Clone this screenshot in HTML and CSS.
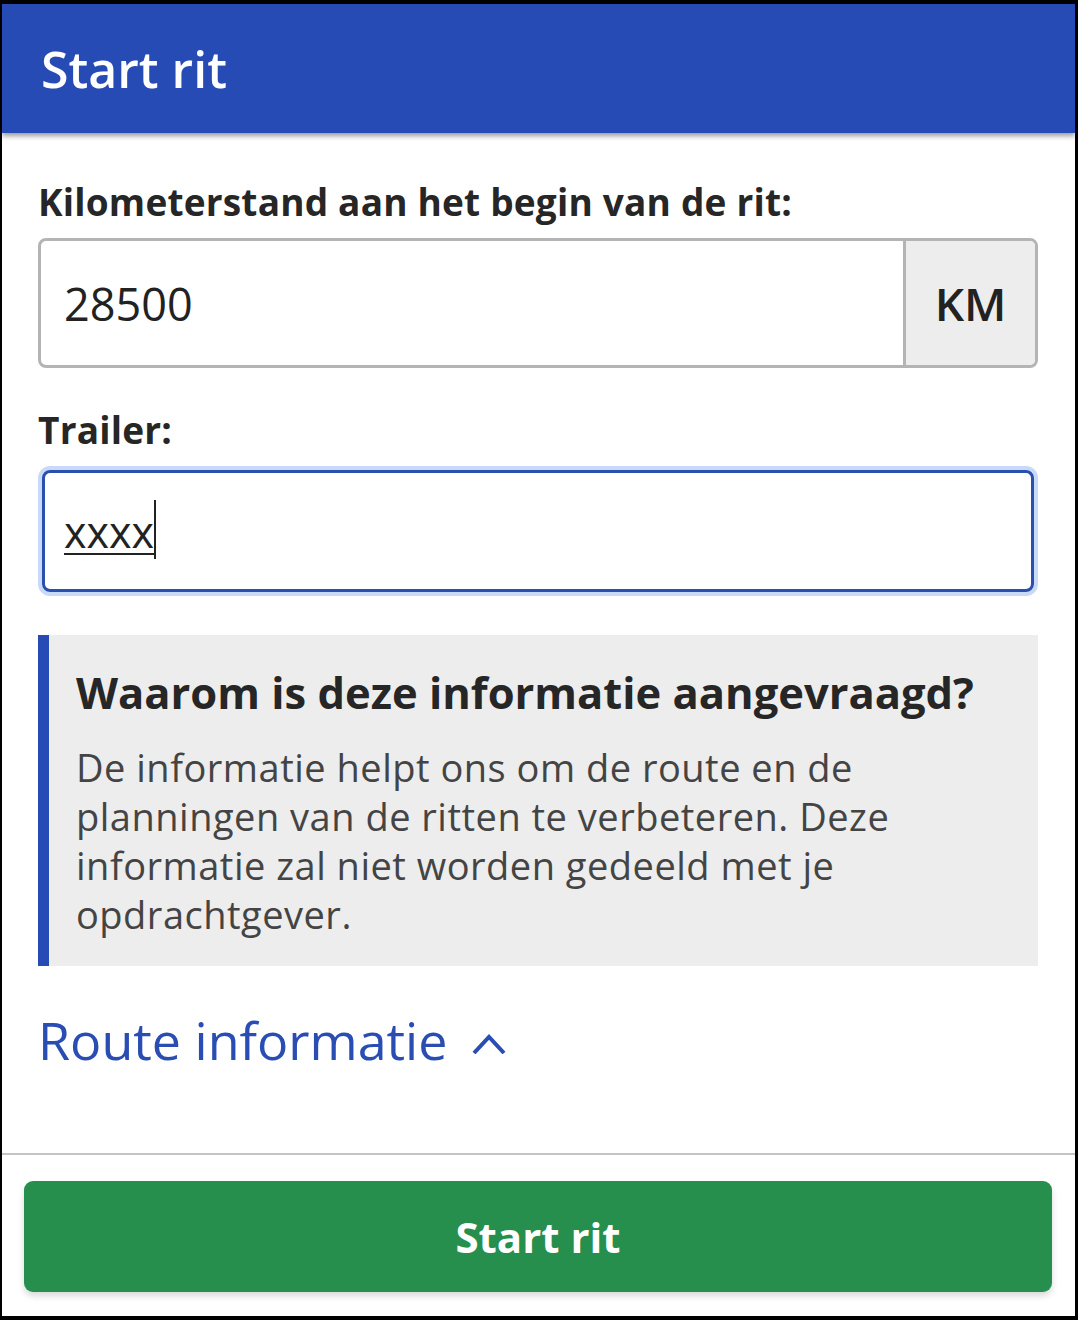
FILE: index.html
```html
<!DOCTYPE html>
<html lang="nl">

<head>
    <meta charset="UTF-8">
    <meta name="viewport" content="width=device-width, initial-scale=1.0">
    <title>Start rit</title>
    <link rel="stylesheet" href="styles.css">
</head>

<body>
    <div class="frame">
        <div class="header">
            <h1>Start rit</h1>
        </div>

        <div class="main">
            <label class="label">Kilometerstand aan het begin van de rit:</label>
            <div class="group">
                <div class="field">28500</div>
                <div class="addon">KM</div>
            </div>

            <label class="label label-trailer">Trailer:</label>
            <div class="focus">
                <div class="field"><span class="typed">xxxx</span><span class="caret"></span></div>
            </div>

            <div class="info">
                <h2>Waarom is deze informatie aangevraagd?</h2>
                <p>De informatie helpt ons om de route en de planningen van de ritten te verbeteren. Deze informatie zal niet worden gedeeld met je opdrachtgever.</p>
            </div>

            <a href="javascript:;" class="route">Route informatie
                <svg width="34" height="22" viewBox="0 0 34 22"><polyline points="2,21 17,5 32,21" fill="none" stroke="#2a4db4" stroke-width="4"/></svg>
            </a>
        </div>

        <div class="footer">
            <a href="javascript:;" class="btn">Start rit</a>
        </div>
    </div>
</body>

</html>
```

FILE: styles.css
```css
* {
    margin: 0;
    padding: 0;
    box-sizing: border-box;
}

a {
    text-decoration: none;
}

body {
    font-family: "Open Sans", "Noto Sans", sans-serif;
    color: #262626;
    background: #fff;
}

.frame {
    display: flex;
    flex-direction: column;
    height: 1320px;
    border-style: solid;
    border-color: #000;
    border-width: 4px 3px 4px 2px;
}

.header {
    height: 129px;
    padding-left: 39px;
    display: flex;
    align-items: center;
    background-color: #264bb5;
    box-shadow: 0 3px 5px rgba(0, 0, 0, .4);
    position: relative;
    z-index: 1;
}

.header h1 {
    color: #fff;
    font-size: 50px;
    font-weight: 600;
}

.main {
    flex: 1;
    padding: 47px 37px 0 36px;
}

.label {
    display: block;
    font-size: 37px;
    font-weight: 700;
    line-height: 44px;
    letter-spacing: .2px;
    margin-bottom: 14px;
}

.label-trailer {
    margin-top: 40px;
}

.group {
    display: flex;
    height: 130px;
    border: 3px solid #b4b4b4;
    border-radius: 8px;
    overflow: hidden;
}

.field {
    flex: 1;
    display: flex;
    align-items: center;
    padding-left: 23px;
    font-size: 45px;
    color: #222;
}

.addon {
    width: 132px;
    display: flex;
    align-items: center;
    justify-content: center;
    background-color: #ededed;
    border-left: 3px solid #b4b4b4;
    font-size: 46px;
    font-weight: 600;
    color: #222;
}

.focus {
    display: flex;
    height: 130px;
    border: 4px solid #c9d9f9;
    border-radius: 12px;
}

.focus .field {
    border: 3px solid #2b4fae;
    border-radius: 8px;
    padding-left: 19px;
}

.typed {
    font-size: 43px;
    text-decoration: underline;
    text-decoration-thickness: 2px;
    text-underline-offset: 5px;
}

.caret {
    width: 2px;
    height: 59px;
    margin-top: -4px;
    background-color: #222;
}

.info {
    margin-top: 39px;
    padding: 32px 40px 27px 27px;
    background-color: #ededed;
    border-left: 11px solid #264bb5;
}

.info h2 {
    font-size: 43.5px;
    font-weight: 700;
    line-height: 52px;
    margin-bottom: 24px;
    white-space: nowrap;
}

.info p {
    max-width: 880px;
    font-size: 38px;
    line-height: 49px;
    letter-spacing: .5px;
    color: #444;
}

.route {
    display: flex;
    align-items: center;
    gap: 25px;
    margin-top: 44px;
    font-size: 52px;
    line-height: 60px;
    font-weight: 500;
    color: #2a4db4;
}

.route svg {
    margin-top: 6px;
}

.footer {
    padding: 26px 23px 24px 22px;
    border-top: 2px solid #c4c4c4;
}

.btn {
    display: flex;
    align-items: center;
    justify-content: center;
    height: 111px;
    border-radius: 9px;
    background-color: #268f4e;
    box-shadow: 0 4px 6px rgba(0, 0, 0, .15);
    color: #fff;
    font-size: 42px;
    font-weight: 700;
}
```
